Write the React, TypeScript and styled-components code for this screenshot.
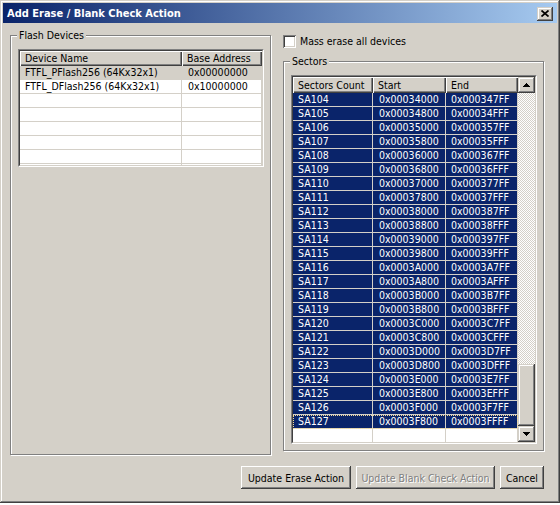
import React from "react";
import styled, { createGlobalStyle, css } from "styled-components";

const GlobalStyle = createGlobalStyle`
  html, body { margin: 0; padding: 0; background: #ffffff; }
  body {
    font-family: "DejaVu Sans Condensed", "DejaVu Sans", sans-serif;
    font-stretch: condensed;
    font-size: 10.5px;
    color: #000000;
  }
  * { box-sizing: border-box; }
`;

const raisedButton = css`
  box-shadow: inset -1px -1px #404040, inset 1px 1px #ffffff,
    inset -2px -2px #808080, inset 2px 2px #d4d0c8;
`;

const raisedScroll = css`
  box-shadow: inset -1px -1px #404040, inset 1px 1px #d4d0c8,
    inset -2px -2px #808080, inset 2px 2px #ffffff;
`;

const Window = styled.div`
  width: 560px;
  height: 503px;
  padding: 3px;
  background: #d4d0c8;
  display: flex;
  flex-direction: column;
  box-shadow: inset -1px -1px #404040, inset 1px 1px #d4d0c8,
    inset -2px -2px #808080, inset 2px 2px #ffffff;
`;

const TitleBar = styled.div`
  height: 20px;
  display: flex;
  align-items: center;
  justify-content: space-between;
  padding: 0 4px 0 4px;
  background: linear-gradient(to right, #0a246a, #a6caf0);
`;

const Title = styled.span`
  color: #ffffff;
  font-weight: bold;
  font-size: 11px;
  line-height: 13px;
`;

const CloseButton = styled.div`
  width: 16px;
  height: 14px;
  margin-top: 1px;
  background: #d4d0c8;
  display: flex;
  align-items: center;
  justify-content: center;
  ${raisedScroll}
`;

const Body = styled.div`
  flex: 1;
  display: flex;
  flex-direction: column;
  padding: 12px 13px 0 7px;
`;

const MainRow = styled.div`
  display: flex;
  gap: 12px;
`;

const GroupBox = styled.div<{ $height: number }>`
  position: relative;
  width: 261px;
  height: ${(p) => p.$height}px;
  border: 1px solid #808080;
  box-shadow: inset 1px 1px #ffffff, 1px 1px #ffffff;
  padding: 13px 0 0 7px;
`;

const Legend = styled.span`
  position: absolute;
  top: -7px;
  left: 6px;
  padding: 0 2px;
  line-height: 13px;
  background: #d4d0c8;
`;

const RightColumn = styled.div`
  display: flex;
  flex-direction: column;
  gap: 13px;
`;

const CheckRow = styled.label`
  height: 13px;
  display: flex;
  align-items: center;
  gap: 4px;
  line-height: 13px;
`;

const CheckBox = styled.span`
  width: 13px;
  height: 13px;
  background: #ffffff;
  box-shadow: inset 1px 1px #808080, inset -1px -1px #ffffff,
    inset 2px 2px #404040, inset -2px -2px #d4d0c8;
`;

const ListFrame = styled.div<{ $height: number }>`
  width: 246px;
  height: ${(p) => p.$height}px;
  border: 1px solid;
  border-color: #808080 #ffffff #ffffff #808080;
`;

const ListInner = styled.div`
  width: 100%;
  height: 100%;
  border: 1px solid;
  border-color: #404040 #d4d0c8 #d4d0c8 #404040;
  background: #ffffff;
  display: flex;
  overflow: hidden;
`;

const ListArea = styled.div`
  flex: 1;
  display: flex;
  flex-direction: column;
  overflow: hidden;
`;

const HeaderRow = styled.div<{ $height: number }>`
  display: flex;
  height: ${(p) => p.$height}px;
  flex-shrink: 0;
`;

const HeaderCell = styled.div<{ $width: number }>`
  width: ${(p) => p.$width}px;
  flex-shrink: 0;
  background: #d4d0c8;
  padding-left: 5px;
  display: flex;
  align-items: center;
  line-height: 13px;
  white-space: nowrap;
  box-shadow: inset 1px 1px #ffffff, inset -1px -1px #404040,
    inset -2px -2px #808080;
`;

const Row = styled.div<{ $bg: string; $fg: string; $focused?: boolean }>`
  display: flex;
  height: 14px;
  flex-shrink: 0;
  background: ${(p) => p.$bg};
  color: ${(p) => p.$fg};
  border-bottom: 1px solid #d4d0c8;
  ${(p) =>
    p.$focused &&
    css`
      outline: 1px dotted #f5db95;
      outline-offset: -1px;
    `}
`;

const Cell = styled.div<{ $width: number; $pad: number }>`
  width: ${(p) => p.$width}px;
  flex-shrink: 0;
  padding-left: ${(p) => p.$pad}px;
  line-height: 13px;
  white-space: nowrap;
  overflow: hidden;
  border-right: 1px solid #d4d0c8;
`;

const ScrollBar = styled.div`
  width: 17px;
  flex-shrink: 0;
  display: flex;
  flex-direction: column;
`;

const ScrollButton = styled.div`
  height: 16px;
  flex-shrink: 0;
  background: #d4d0c8;
  display: flex;
  align-items: center;
  justify-content: center;
  ${raisedScroll}
`;

const Track = styled.div`
  flex: 1;
  background-color: #ffffff;
  background-image: repeating-conic-gradient(#d4d0c8 0 25%, #ffffff 0 50%);
  background-size: 2px 2px;
`;

const Thumb = styled.div`
  height: 62px;
  flex-shrink: 0;
  background: #d4d0c8;
  ${raisedScroll}
`;

const ButtonRow = styled.div`
  display: flex;
  justify-content: flex-end;
  gap: 5px;
  margin-top: 11px;
`;

const Button = styled.button<{ $width: number }>`
  width: ${(p) => p.$width}px;
  height: 23px;
  padding: 0;
  border: none;
  background: #d4d0c8;
  font: inherit;
  font-stretch: condensed;
  color: ${(p) => (p.disabled ? "#808080" : "#000000")};
  text-shadow: ${(p) => (p.disabled ? "1px 1px #ffffff" : "none")};
  white-space: nowrap;
  ${raisedButton}
`;

const Arrow = ({ down }: { down?: boolean }) => (
  <svg width="7" height="4" viewBox="0 0 7 4" shapeRendering="crispEdges">
    {down ? (
      <polygon points="0,0 7,0 3.5,4" fill="#000" />
    ) : (
      <polygon points="0,4 7,4 3.5,0" fill="#000" />
    )}
  </svg>
);

const CloseGlyph = () => (
  <svg width="8" height="7" viewBox="0 0 8 7">
    <path d="M0.5,0.5 L7.5,6.5 M7.5,0.5 L0.5,6.5" stroke="#000" strokeWidth="1.7" />
  </svg>
);

const hex = (n: number) => "0x" + n.toString(16).toUpperCase().padStart(8, "0");

const sectors = Array.from({ length: 24 }, (_, i) => {
  const start = 0x34000 + i * 0x800;
  return { name: `SA${104 + i}`, start: hex(start), end: hex(start + 0x7ff) };
});

const devices = [
  { name: "FTFL_PFlash256 (64Kx32x1)", base: "0x00000000" },
  { name: "FTFL_DFlash256 (64Kx32x1)", base: "0x10000000" },
];

const devCols = [162, 80];
const secCols = [80, 73, 72];

export default function App() {
  return (
    <>
      <GlobalStyle />
      <Window>
        <TitleBar>
          <Title>Add Erase / Blank Check Action</Title>
          <CloseButton>
            <CloseGlyph />
          </CloseButton>
        </TitleBar>
        <Body>
          <MainRow>
            <GroupBox $height={420}>
              <Legend>Flash Devices</Legend>
              <ListFrame $height={118}>
                <ListInner>
                  <ListArea>
                    <HeaderRow $height={15}>
                      <HeaderCell $width={devCols[0]}>Device Name</HeaderCell>
                      <HeaderCell $width={devCols[1]}>Base Address</HeaderCell>
                    </HeaderRow>
                    {devices.map((d, i) => (
                      <Row key={d.name} $bg={i === 0 ? "#d4d0c8" : "#ffffff"} $fg="#000000">
                        <Cell $width={devCols[0]} $pad={5}>{d.name}</Cell>
                        <Cell $width={devCols[1]} $pad={6}>{d.base}</Cell>
                      </Row>
                    ))}
                    {Array.from({ length: 6 }, (_, i) => (
                      <Row key={`e${i}`} $bg="#ffffff" $fg="#000000">
                        <Cell $width={devCols[0]} $pad={5} />
                        <Cell $width={devCols[1]} $pad={6} />
                      </Row>
                    ))}
                  </ListArea>
                </ListInner>
              </ListFrame>
            </GroupBox>
            <RightColumn>
              <CheckRow>
                <CheckBox />
                <span>Mass erase all devices</span>
              </CheckRow>
              <GroupBox $height={390}>
                <Legend>Sectors</Legend>
                <ListFrame $height={369}>
                  <ListInner>
                    <ListArea>
                      <HeaderRow $height={16}>
                        <HeaderCell $width={secCols[0]}>Sectors Count</HeaderCell>
                        <HeaderCell $width={secCols[1]}>Start</HeaderCell>
                        <HeaderCell $width={secCols[2]}>End</HeaderCell>
                      </HeaderRow>
                      {sectors.map((s, i) => (
                        <Row
                          key={s.name}
                          $bg="#0a246a"
                          $fg="#ffffff"
                          $focused={i === sectors.length - 1}
                        >
                          <Cell $width={secCols[0]} $pad={5}>{s.name}</Cell>
                          <Cell $width={secCols[1]} $pad={6}>{s.start}</Cell>
                          <Cell $width={secCols[2]} $pad={5}>{s.end}</Cell>
                        </Row>
                      ))}
                      <Row $bg="#ffffff" $fg="#000000">
                        <Cell $width={secCols[0]} $pad={5} />
                        <Cell $width={secCols[1]} $pad={6} />
                        <Cell $width={secCols[2]} $pad={5} />
                      </Row>
                    </ListArea>
                    <ScrollBar>
                      <ScrollButton>
                        <Arrow />
                      </ScrollButton>
                      <Track />
                      <Thumb />
                      <ScrollButton>
                        <Arrow down />
                      </ScrollButton>
                    </ScrollBar>
                  </ListInner>
                </ListFrame>
              </GroupBox>
            </RightColumn>
          </MainRow>
          <ButtonRow>
            <Button $width={110}>Update Erase Action</Button>
            <Button $width={139} disabled>
              Update Blank Check Action
            </Button>
            <Button $width={44}>Cancel</Button>
          </ButtonRow>
        </Body>
      </Window>
    </>
  );
}
